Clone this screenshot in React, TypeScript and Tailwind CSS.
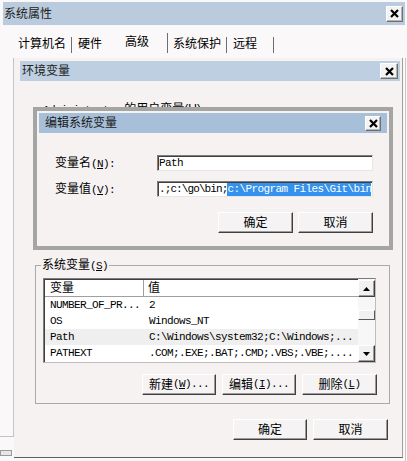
import React from "react";

const monoCls = "font-['Liberation_Mono',monospace] text-[11px] tracking-[-0.6px]";

function M({ children, className = "" }: { children: React.ReactNode; className?: string }) {
  return <span className={`font-['Liberation_Mono',monospace] text-[11px] tracking-[-0.6px] ${className}`}>{children}</span>;
}

function U({ children }: { children: React.ReactNode }) {
  return <span className="underline underline-offset-[1px]">{children}</span>;
}

function CloseBtn({ className = "" }: { className?: string }) {
  return (
    <div
      className={`flex items-center justify-center bg-[#f3f3f3] border border-t-white border-l-white border-r-[#6f6f6f] border-b-[#6f6f6f] shadow-[inset_-1px_-1px_0_#b5b5b5] ${className}`}
    >
      <svg width="9" height="9" viewBox="0 0 9 9">
        <path d="M1 1L8 8M8 1L1 8" stroke="#000" strokeWidth="2.2" />
      </svg>
    </div>
  );
}

function Btn({ children, className = "" }: { children: React.ReactNode; className?: string }) {
  return (
    <div
      className={`flex items-center justify-center h-[21px] bg-[#f5f3f3] border border-t-white border-l-white border-r-[#404040] border-b-[#404040] shadow-[inset_-1px_-1px_0_#9c9c9c] text-[12px] leading-none text-black ${className}`}
    >
      {children}
    </div>
  );
}

function Tri({ up }: { up?: boolean }) {
  return (
    <svg width="7" height="4" viewBox="0 0 7 4">
      {up ? <polygon points="3.5,0 7,4 0,4" fill="#000" /> : <polygon points="0,0 7,0 3.5,4" fill="#000" />}
    </svg>
  );
}

const rows = [
  { n: "NUMBER_OF_PR...", v: "2" },
  { n: "OS", v: "Windows_NT" },
  { n: "Path", v: "C:\\Windows\\system32;C:\\Windows;...", sel: true },
  { n: "PATHEXT", v: ".COM;.EXE;.BAT;.CMD;.VBS;.VBE;...." },
];

export default function App() {
  return (
    <div className="w-[407px] h-[461px] bg-[#faf8f8] overflow-hidden flex flex-col text-[12px] leading-[14px] text-black font-['Liberation_Sans','Noto_Sans_CJK_SC',sans-serif]">
      {/* outer title bar */}
      <div className="mt-[2px] ml-[3px] w-[402px] h-[23px] bg-[#b9cbdc] flex items-center justify-between">
        <span className="pl-[1px] text-[#222]">系统属性</span>
        <CloseBtn className="w-[17px] h-[16px] mr-[2px]" />
      </div>

      {/* tabs */}
      <div className="mt-[8px] h-[20px] flex items-end pl-[14px]">
        <div className="w-[58px] h-[16px] pl-[4px] border-r border-[#6e6e6e]">计算机名</div>
        <div className="w-[43px] h-[16px] pl-[6px]">硬件</div>
        <div className="w-[53px] h-[20px] pl-[10px] pt-[2px] border-r border-[#6e6e6e]">高级</div>
        <div className="w-[59px] h-[16px] pl-[5px] border-r border-[#6e6e6e]">系统保护</div>
        <div className="w-[47px] h-[16px] pl-[6px] border-r border-[#6e6e6e]">远程</div>
      </div>

      {/* main row */}
      <div className="mt-[5px] h-[403px] flex">
        <div className="w-[14px] flex flex-col">
          <div className="w-[14px] h-[379px] border-r border-b border-[#c4c4c4]" />
          <div className="mt-[13px] w-[12px] h-[6px] border border-[#9a9a9a] bg-[#e6e6e6]" />
        </div>

        {/* env dialog */}
        <div className="relative w-[389px] h-[400px] bg-[#f6f2f2] border-r border-b border-r-[#a0a0a0] border-b-[#5f5f5f] flex flex-col">
          <div className="mt-[3px] ml-[6px] mr-[2px] h-[20px] bg-[#bdcfe0] flex items-center justify-between">
            <span className="pl-[2px] text-[#222]">环境变量</span>
            <CloseBtn className="w-[18px] h-[16px] mr-[2px]" />
          </div>

          <div className="h-[177px]">
            <div className="mt-[21px] ml-[29px]">
              <M>Administrator</M> 的用户变量(<U>U</U>)
            </div>
          </div>

          <fieldset className="ml-[21px] w-[355px] border border-[#a9a9a9]">
            <legend className="ml-[5px] px-[1px]">
              系统变量<M>(<U>S</U>)</M>
            </legend>
            <div className="mt-[5px] ml-[7px] w-[333px] h-[85px] bg-white border border-t-[#7c7c7c] border-l-[#7c7c7c] border-r-[#bdbdbd] border-b-[#bdbdbd] shadow-[inset_1px_1px_0_#404040] flex">
              <div className="flex-1 flex flex-col pl-[1px] pt-[1px]">
                <div className="h-[17px] flex border-b border-[#a0a0a0]">
                  <div className="w-[99px] pl-[5px] border-r border-[#a0a0a0] flex items-center">变量</div>
                  <div className="pl-[4px] flex items-center">值</div>
                </div>
                {rows.map((r) => (
                  <div key={r.n} className={`h-[16px] flex items-center whitespace-nowrap ${r.sel ? "bg-[#efefef]" : ""}`}>
                    <div className={`w-[99px] pl-[5px] ${monoCls}`}>{r.n}</div>
                    <div className={`pl-[5px] ${monoCls}`}>{r.v}</div>
                  </div>
                ))}
              </div>
              <div className="w-[17px] flex flex-col bg-[#f7f7f7] pt-[1px]">
                <div className="h-[17px] flex items-center justify-center bg-[#f1f1f1] border border-t-white border-l-white border-r-[#404040] border-b-[#404040] shadow-[inset_-1px_-1px_0_#9c9c9c]">
                  <Tri up />
                </div>
                <div className="flex-1">
                  <div className="mt-[13px] h-[10px] bg-[#f1f1f1] border border-t-white border-l-white border-r-[#5a5a5a] border-b-[#5a5a5a]" />
                </div>
                <div className="h-[17px] flex items-center justify-center bg-[#f1f1f1] border border-t-white border-l-white border-r-[#404040] border-b-[#404040] shadow-[inset_-1px_-1px_0_#9c9c9c]">
                  <Tri />
                </div>
              </div>
            </div>
            <div className="mt-[11px] pb-[8px] pr-[12px] flex justify-end gap-[6px]">
              <Btn className="w-[74px]">
                新建<M>(<U>W</U>)...</M>
              </Btn>
              <Btn className="w-[74px]">
                编辑<M>(<U>I</U>)...</M>
              </Btn>
              <Btn className="w-[75px]">
                删除<M>(<U>L</U>)</M>
              </Btn>
            </div>
          </fieldset>

          <div className="mt-[15px] pr-[14px] flex justify-end gap-[6px]">
            <Btn className="w-[74px]">确定</Btn>
            <Btn className="w-[75px]">取消</Btn>
          </div>

          {/* edit dialog overlay */}
          <div className="absolute left-[19px] top-[49px] w-[360px] h-[143px] bg-[#f6f2f2] border-[4px] border-[#a5a5a5] p-[2px] flex flex-col">
            <div className="h-[20px] bg-[#a8bfd9] flex items-center justify-between">
              <span className="pl-[6px] text-[#1a1a1a]">编辑系统变量</span>
              <CloseBtn className="w-[16px] h-[15px] mr-[6px]" />
            </div>
            <div className="mt-[22px] h-[16px] flex items-center">
              <div className="w-[118px] pl-[16px]">
                变量名<M>(<U>N</U>):</M>
              </div>
              <div className="w-[216px] h-[16px] bg-white border border-t-[#7f7f7f] border-l-[#7f7f7f] border-r-[#e6e6e6] border-b-[#e6e6e6] shadow-[inset_1px_1px_0_#404040] overflow-hidden whitespace-nowrap flex items-center pl-[1px]">
                <M>Path</M>
              </div>
            </div>
            <div className="mt-[10px] h-[16px] flex items-center">
              <div className="w-[118px] pl-[16px]">
                变量值<M>(<U>V</U>):</M>
              </div>
              <div className="w-[216px] h-[16px] bg-white border border-t-[#7f7f7f] border-l-[#7f7f7f] border-r-[#e6e6e6] border-b-[#e6e6e6] shadow-[inset_1px_1px_0_#404040] overflow-hidden whitespace-nowrap flex items-center pl-[1px]">
                <span className="font-['Liberation_Mono',monospace] text-[11px] tracking-[-0.9px]">.;c:\go\bin;</span>
                <span className="font-['Liberation_Mono',monospace] text-[11px] tracking-[-0.6px] bg-[#3392ee] text-white leading-[13px]">c:\Program Files\Git\bin</span>
              </div>
            </div>
            <div className="mt-[15px] pr-[14px] flex justify-end gap-[5px]">
              <Btn className="w-[75px]">确定</Btn>
              <Btn className="w-[75px]">取消</Btn>
            </div>
          </div>
        </div>

        <div className="w-[4px] h-full">
          <div className="ml-[2px] h-full border-l border-[#c8c8c8]" />
        </div>
      </div>
    </div>
  );
}
